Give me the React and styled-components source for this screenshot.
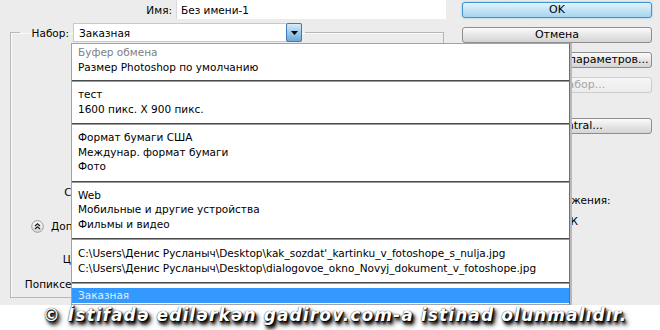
import React from 'react';
import styled, { createGlobalStyle } from 'styled-components';

const GlobalStyle = createGlobalStyle`
  html, body {
    margin: 0;
    padding: 0;
    background: #fff;
  }
  body {
    font-family: "DejaVu Sans", Verdana, sans-serif;
    font-size: 10.5px;
    color: #000;
  }
`;

const Page = styled.div`
  position: relative;
  width: 660px;
  height: 330px;
  overflow: hidden;
  background: #fff;
`;

const Dialog = styled.div`
  display: flex;
  height: 305px;
  background: #ececec;
`;

const LeftPane = styled.div`
  width: 452px;
  display: flex;
  flex-direction: column;
`;

const NameRow = styled.div`
  display: flex;
  align-items: center;
  height: 19px;
  gap: 4px;
`;

const NameLabel = styled.label`
  width: 172px;
  text-align: right;
`;

const TextField = styled.div`
  width: 270px;
  height: 19px;
  box-sizing: border-box;
  display: flex;
  align-items: center;
  padding-left: 4px;
  background: #fff;
  border-left: 1px solid #d9d9d9;
`;

const GroupBox = styled.fieldset`
  margin: 4px 0 0 10px;
  padding: 0 0 2px 0;
  width: 434px;
  height: 275px;
  box-sizing: border-box;
  border: 1px solid #b7b7b7;
  box-shadow: inset 1px 1px 0 #fafafa;
  display: flex;
  flex-direction: column;
`;

const Legend = styled.legend`
  margin-left: 9px;
  padding: 0 3px;
  display: flex;
  align-items: center;
  gap: 4px;
`;

const LegendLabel = styled.label`
  width: 46px;
  text-align: right;
`;

const Select = styled.div`
  width: 229px;
  height: 19px;
  box-sizing: border-box;
  display: flex;
  align-items: center;
  padding-left: 5px;
  background: #fff;
  border: 1px solid #c9c9c9;
`;

const SelectArrow = styled.span`
  margin-left: auto;
  width: 16px;
  height: 19px;
  margin-right: -1px;
  box-sizing: border-box;
  display: flex;
  align-items: center;
  justify-content: center;
  border: 1px solid #3e7bb3;
  border-radius: 2px;
  background: linear-gradient(#d9ecf9, #9ccaed 50%, #6ea9d9);
`;

const FieldRow = styled.div`
  display: flex;
  align-items: center;
  height: 22px;
  gap: 6px;
  margin-top: ${p => p.$gap}px;
`;

const FieldLabel = styled.label`
  width: 160px;
  text-align: right;
  white-space: nowrap;
`;

const FieldControl = styled.div`
  width: 150px;
  height: 18px;
  background: #fff;
  border: 1px solid #c9c9c9;
`;

const Disclosure = styled.div`
  display: flex;
  align-items: center;
  gap: 7px;
  height: 22px;
  padding-left: 20px;
  margin-top: ${p => p.$gap}px;
`;

const RightPane = styled.div`
  width: 190px;
  margin-left: 10px;
  display: flex;
  flex-direction: column;
`;

const Button = styled.button`
  width: 190px;
  height: 16px;
  margin-top: ${p => p.$gap}px;
  padding: 0;
  box-sizing: border-box;
  font-family: inherit;
  font-size: 11px;
  line-height: 14px;
  color: ${p => (p.disabled ? '#a6a6a6' : '#000')};
  border-radius: 3px;
  border: 1px solid ${p => (p.$primary ? '#3f94cf' : p.disabled ? '#cdcdcd' : '#8e8e8e')};
  background: ${p =>
    p.$primary
      ? 'linear-gradient(#e4f4fc, #c4e4f6 50%, #a6d4f0)'
      : p.disabled
      ? 'linear-gradient(#f6f6f6, #ececec)'
      : 'linear-gradient(#fbfbfb, #e6e6e6 50%, #d4d4d4)'};
  box-shadow: ${p => (p.$primary ? '0 0 2px #6fb9ea' : 'none')};
`;

const InfoLabel = styled.div`
  margin-top: 60px;
  padding-left: ${p => p.$indent}px;
  white-space: nowrap;
`;

const InfoValue = styled.div`
  margin-top: 9px;
  padding-left: ${p => p.$indent}px;
  white-space: nowrap;
`;

const Menu = styled.div`
  position: absolute;
  top: 43px;
  left: 71px;
  width: 497px;
  background: #fff;
  border: 1px solid #a3a3a3;
  border-right: 1px solid #6f6f6f;
  box-shadow: 2px 0 0 #b9b9b9;
`;

const MenuGroup = styled.div`
  padding: ${p => p.$top}px 0 ${p => p.$bottom}px;
  & + & {
    border-top: 1px solid #4a4a4a;
    box-shadow: inset 0 1px 0 #9a9a9a;
  }
`;

const MenuItem = styled.div`
  height: ${p => (p.$active ? 15 : 14.5)}px;
  line-height: ${p => (p.$active ? 15 : 14.5)}px;
  padding-left: 6px;
  white-space: nowrap;
  color: ${p => (p.$muted ? '#808080' : p.$active ? '#dcefff' : '#000')};
  background: ${p => (p.$active ? '#3399ff' : 'transparent')};
`;

const Watermark = styled.div`
  height: 25px;
  padding-left: 10px;
  display: flex;
  justify-content: center;
  font-family: "DejaVu Sans", sans-serif;
  font-size: 17px;
  font-weight: bold;
  font-style: italic;
  letter-spacing: 1.1px;
  line-height: 20px;
  color: #fff;
  white-space: nowrap;
  text-shadow: 0 0 1px #000, 1px 1px 1px #000, 2px 3px 3px #000, 3px 4px 5px #222;
`;

const menuGroups = [
  { top: 1, bottom: 6, items: [{ text: 'Буфер обмена', muted: true }, { text: 'Размер Photoshop по умолчанию' }] },
  { top: 6, bottom: 7, items: [{ text: 'тест' }, { text: '1600 пикс. X 900 пикс.' }] },
  { top: 6, bottom: 7, items: [{ text: 'Формат бумаги США' }, { text: 'Междунар. формат бумаги' }, { text: 'Фото' }] },
  { top: 6, bottom: 7, items: [{ text: 'Web' }, { text: 'Мобильные и другие устройства' }, { text: 'Фильмы и видео' }] },
  {
    top: 7,
    bottom: 7,
    items: [
      { text: "C:\\Users\\Денис Русланыч\\Desktop\\kak_sozdat'_kartinku_v_fotoshope_s_nulja.jpg" },
      { text: 'C:\\Users\\Денис Русланыч\\Desktop\\dialogovoe_okno_Novyj_dokument_v_fotoshope.jpg' },
    ],
  },
  { top: 5, bottom: 1, items: [{ text: 'Заказная', active: true }] },
];

const fields = [
  { label: 'Размер:', gap: 6 },
  { label: 'Ширина:', gap: 4 },
  { label: 'Высота:', gap: 4 },
  { label: 'Разрешение:', gap: 4 },
  { label: 'Цветовой режим:', gap: 4 },
  { label: 'Содержимое фона:', gap: 7 },
];

function DownArrow() {
  return (
    <svg width="7" height="4" viewBox="0 0 7 4">
      <polygon points="0,0 7,0 3.5,4" fill="#000" />
    </svg>
  );
}

function CollapseIcon() {
  return (
    <svg width="13" height="13" viewBox="0 0 13 13">
      <defs>
        <linearGradient id="cg" x1="0" y1="0" x2="0" y2="1">
          <stop offset="0" stopColor="#ffffff" />
          <stop offset="1" stopColor="#d6d6d6" />
        </linearGradient>
      </defs>
      <circle cx="6.5" cy="6.5" r="5.8" fill="url(#cg)" stroke="#9a9a9a" strokeWidth="1" />
      <polyline points="4,6 6.5,3.8 9,6" fill="none" stroke="#222" strokeWidth="1.3" />
      <polyline points="4,9 6.5,6.8 9,9" fill="none" stroke="#222" strokeWidth="1.3" />
    </svg>
  );
}

export default function App() {
  return (
    <Page>
      <GlobalStyle />
      <Dialog>
        <LeftPane>
          <NameRow>
            <NameLabel>Имя:</NameLabel>
            <TextField>Без имени-1</TextField>
          </NameRow>
          <GroupBox>
            <Legend>
              <LegendLabel>Набор:</LegendLabel>
              <Select>
                Заказная
                <SelectArrow>
                  <DownArrow />
                </SelectArrow>
              </Select>
            </Legend>
            {fields.map(f => (
              <FieldRow key={f.label} $gap={f.gap}>
                <FieldLabel>{f.label}</FieldLabel>
                <FieldControl />
              </FieldRow>
            ))}
            <Disclosure $gap={12}>
              <CollapseIcon />
              Дополнительно
            </Disclosure>
            <FieldRow $gap={11}>
              <FieldLabel>Цветовой профиль:</FieldLabel>
              <FieldControl />
            </FieldRow>
            <FieldRow $gap={3}>
              <FieldLabel>Попиксельная пропорция:</FieldLabel>
              <FieldControl />
            </FieldRow>
          </GroupBox>
        </LeftPane>
        <RightPane>
          <Button $primary $gap={2}>OK</Button>
          <Button $gap={9}>Отмена</Button>
          <Button $gap={9}>Сохранить набор параметров...</Button>
          <Button $gap={9} disabled>Удалить набор...</Button>
          <Button $gap={25}>Device Central...</Button>
          <InfoLabel $indent={28}>Размер изображения:</InfoLabel>
          <InfoValue $indent={85}>4,12К</InfoValue>
        </RightPane>
      </Dialog>
      <Watermark>© İstifadə edilərkən gadirov.com-a istinad olunmalıdır.</Watermark>
      <Menu>
        {menuGroups.map((g, i) => (
          <MenuGroup key={i} $top={g.top} $bottom={g.bottom}>
            {g.items.map(it => (
              <MenuItem key={it.text} $muted={it.muted} $active={it.active}>
                {it.text}
              </MenuItem>
            ))}
          </MenuGroup>
        ))}
      </Menu>
    </Page>
  );
}
